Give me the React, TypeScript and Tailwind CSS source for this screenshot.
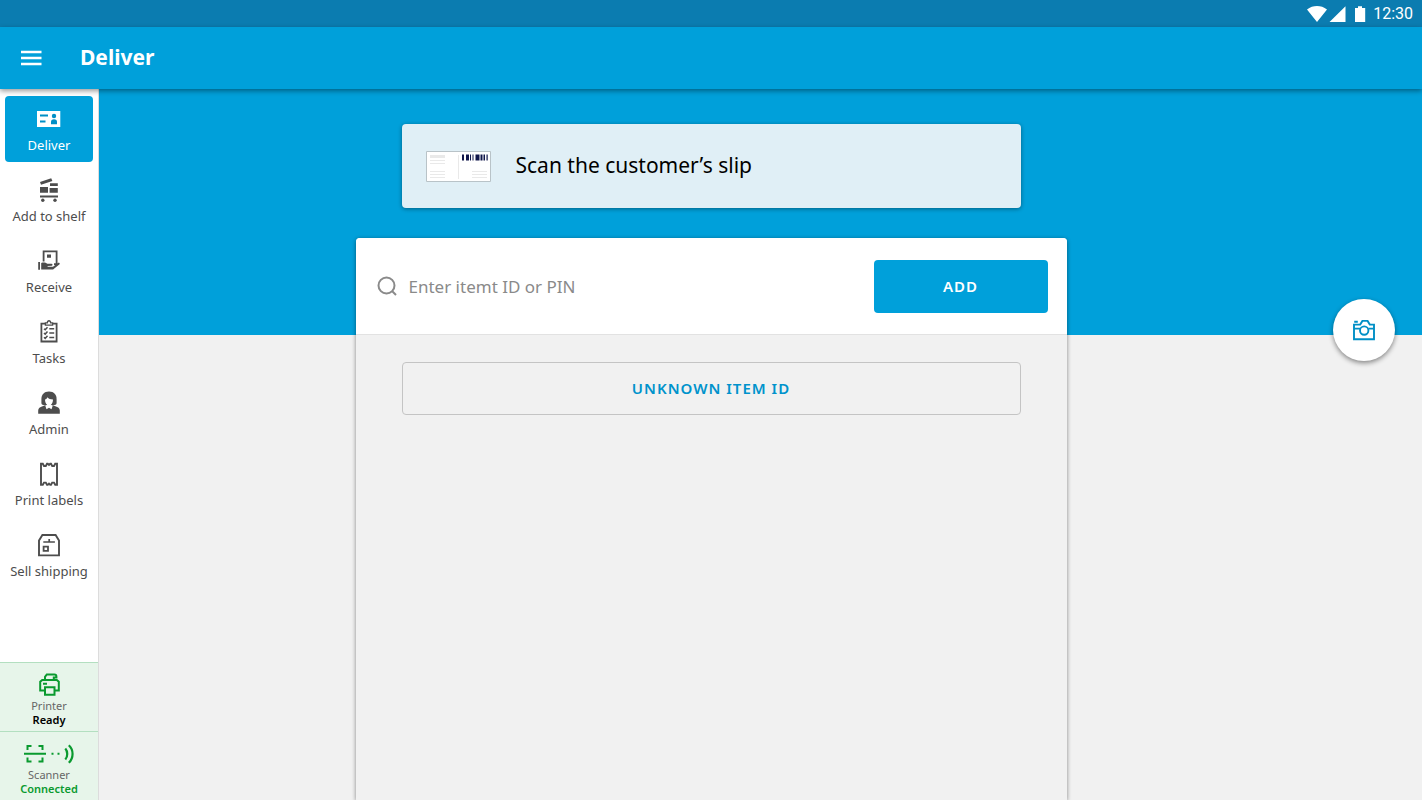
import React, { useState } from 'react';

interface IconProps {
  className?: string;
}

const DeliverIcon: React.FC<IconProps> = ({ className }) => (
  <svg viewBox="0 0 24 24" className={className} fill="none" aria-hidden="true">
    <path fill="currentColor" d="M0 4h23.3v16H0z" />
    <path stroke="#008fc6" strokeWidth="1.8" d="M3 8.500h8M3 14.500h5.500" />
    <circle cx="17" cy="9" r="2.200" fill="#008fc6" />
    <path fill="#008fc6" d="M14 17.200v-2.600c0-1.500 1-2.400 3-2.400s3 .9 3 2.400v2.600z" />
  </svg>
);

const ShelfIcon: React.FC<IconProps> = ({ className }) => (
  <svg viewBox="0 0 24 24" className={className} fill="currentColor" aria-hidden="true">
    <path d="M3 4 14.2.2l1.200 2.700L4 6.800zM3 9h8v5.700H3zM13 5.200h7.800V8H13zM12.600 10h8.200v4.700h-8.200zM3 17.500h18v1.900H3z" />
    <circle cx="5.800" cy="22.200" r="1.700" />
    <circle cx="18" cy="22.200" r="1.700" />
  </svg>
);

const ReceiveIcon: React.FC<IconProps> = ({ className }) => (
  <svg viewBox="0 0 24 24" className={className} fill="none" aria-hidden="true">
    <path stroke="currentColor" strokeWidth="1.800" d="M6.600 12.500V2.300h13V15.200H17" />
    <path fill="currentColor" d="M10 5.600h4v3.200h-4zM1.200 13H3v7.800H1.200zM4.200 14c2.600-1 4.400-.3 6.200.8h4c1.400 0 1.500 1.700.4 1.900l-4.200.3v.7h5.400l4.800-3.600c1-.7 2.400.1 1.800 1.100L17 19.700c-.6.600-1.100.9-1.900.9H4.200z" />
  </svg>
);

const TasksIcon: React.FC<IconProps> = ({ className }) => (
  <svg viewBox="0 0 24 24" className={className} fill="none" stroke="currentColor" aria-hidden="true">
    <path strokeWidth="1.800" d="M8 3.700H4.400v17.800h15.200V3.700H16" />
    <path strokeWidth="1.300" d="M8.400 5.100V2.900h1.900c.2-2.900 3.200-2.900 3.400 0h1.900v2.200z" />
    <path strokeWidth="1.500" d="m7 8.700 1.200 1.100 2.300-2.600M7 13l1.200 1.100 2.300-2.600M7 17.300l1.200 1.100 2.300-2.600M12.300 8.800h4.900M12.300 13.100h4.900M12.300 17.400h4.900" />
  </svg>
);

const AdminIcon: React.FC<IconProps> = ({ className }) => (
  <svg viewBox="0 0 24 24" className={className} fill="currentColor" aria-hidden="true">
    <path d="M12 .6C7 .6 4.400 3.800 4.400 8v4c0 1.200.8 1.900 2 1.900h11.200c1.200 0 2-.7 2-1.900V8C19.600 3.800 17 .6 12 .6z" />
    <path d="M1.200 22.800v-3.200c0-2.500 1.800-3.700 4.400-4.400l3.400-1.400h6l3.400 1.400c2.600.7 4.400 1.900 4.400 4.400v3.200z" />
    <path fill="#fff" d="M8 8.400c1.300-.3 2-1.100 2.400-2.200 1.200 1.500 3 2.200 5.600 2.200 0 2.600-.9 4.300-2.200 5.300l2 .9-1.300 3.600-2.500-1.500-2.500 1.500-1.300-3.600 2-.9C8.900 12.700 8 11 8 8.400z" />
  </svg>
);

const LabelsIcon: React.FC<IconProps> = ({ className }) => (
  <svg viewBox="0 0 24 24" className={className} fill="none" stroke="currentColor" strokeWidth="1.900" aria-hidden="true">
    <path d="M4 1.800h1.800L7 4h1.800L10 1.800h.8L12 3l1.200-1.200h.8L15.200 4H17l1.200-2.200H20v21h-1.800L17 20.600h-1.800L14 22.800h-.8L12 21.600l-1.200 1.200H10l-1.200-2.200H7l-1.200 2.200H4z" />
  </svg>
);

const ShippingIcon: React.FC<IconProps> = ({ className }) => (
  <svg viewBox="0 0 24 24" className={className} fill="none" stroke="currentColor" aria-hidden="true">
    <path strokeWidth="1.900" d="M5.400 2h13.200L22 7.500v14.900H2V7.500z" />
    <path strokeWidth="1.700" d="M6.300 9h11.600M12.200 6v3" />
    <path strokeWidth="1.800" d="M6.600 13.600h4.400v4.200H6.600z" />
  </svg>
);

const PrinterIcon: React.FC<IconProps> = ({ className }) => (
  <svg viewBox="0 0 24 24" className={className} fill="none" stroke="currentColor" strokeWidth="2" aria-hidden="true">
    <path d="M8 17.500H3.200V8.800l2-1.800h14.600l2 1.800v8.700h-4.300" />
    <path d="M8 7V3.800l1.800-2.300h7.600c1.300 0 2 .9 2 2.300v.8h-2.600V7M8 14.300h9.500v7.400H8zM6 10.800h4" />
  </svg>
);

const ScannerIcon: React.FC<IconProps> = ({ className }) => (
  <svg viewBox="0 0 50 20" className={className} fill="none" stroke="currentColor" strokeWidth="2" aria-hidden="true">
    <path d="M0 9.700h22M3.500 6V2h4M14.500 2h4v4M3.500 13.500v4h4M14.500 17.500h4v-4" />
    <path d="M27.500 9.700h2M33.500 9.700h2" />
    <path strokeWidth="2.200" d="M41.300 4.500c2.600 3 2.600 8 0 11M44.800 1.200c5 4.500 5 13 0 17.600" />
  </svg>
);

const CameraIcon: React.FC<IconProps> = ({ className }) => (
  <svg viewBox="0 0 24 22" className={className} fill="none" stroke="currentColor" strokeWidth="1.900" aria-hidden="true">
    <path d="M2 20.200V5.600h6.200l2.200-3.700h5.200l2.200 3.700H22v14.600z" />
    <path d="M2 9.600h6M16.400 9.600H22M2.200 2.800h3.600" />
    <circle cx="12.200" cy="11.600" r="4.200" />
  </svg>
);

// Miniature of the slip that the customer brings
const SlipPicture: React.FC<IconProps> = ({ className }) => (
  <svg viewBox="0 0 65 31" className={className} aria-hidden="true">
    <path fill="#fff" stroke="#b9c3c8" d="M.5.5h64v30H.5z" />
    <path fill="#e9e9e9" d="M4 4h15v3H4zM4 9h15v1H4zM4 12h15v1H4zM4 20h15v1H4zM4 23h15v1H4zM4 26h15v1H4zM46 20h15v1H46zM46 23h15v1H46zM46 26h15v1H46zM32 4h1v24h-1z" />
    <path fill="#10164a" d="M36 3.500h2v6h-2zM40 3.500h3v6h-3zM44 3.500h1v6h-1zM46.500 3.500h1v6h-1zM49.500 3.500h4v6h-4zM54.500 3.500h2v6h-2zM57.500 3.500h1.500v6h-1.500zM60.500 3.500h1.200v6h-1.200z" />
  </svg>
);

const menuItems = [
  { id: 'deliver', label: 'Deliver', Icon: DeliverIcon },
  { id: 'shelf', label: 'Add to shelf', Icon: ShelfIcon },
  { id: 'receive', label: 'Receive', Icon: ReceiveIcon },
  { id: 'tasks', label: 'Tasks', Icon: TasksIcon },
  { id: 'admin', label: 'Admin', Icon: AdminIcon },
  { id: 'labels', label: 'Print labels', Icon: LabelsIcon },
  { id: 'shipping', label: 'Sell shipping', Icon: ShippingIcon },
];

const StatusBar: React.FC = () => (
  <div className="flex h-[27px] shrink-0 items-center justify-end bg-[#0b7cb0] pr-[9px] text-white">
    <svg viewBox="0 0 59 16" className="mr-[7px] h-4 w-[59px]" fill="currentColor" aria-hidden="true">
      <path d="M0 3.500C6-1.100 14-1.100 20 3.500L10 16zM22.500 16 38.500.2V16zM48 2h3V.2h4V2h3.200v14H48z" />
    </svg>
    <span className="font-['Roboto',sans-serif] text-base">12:30</span>
  </div>
);

const Header: React.FC = () => (
  <header className="relative z-10 flex h-[62px] shrink-0 items-center bg-[#00a0da] px-5 text-white shadow-[0_2px_5px_rgba(0,0,0,0.4)]">
    <button type="button" aria-label="Menu" className="mr-[38px]">
      <svg viewBox="0 0 22 18" className="h-[18px] w-[22px]" stroke="currentColor" strokeWidth="2.400" aria-hidden="true">
        <path d="M1 3h20.500M1 9h20.500M1 15h20.500" />
      </svg>
    </button>
    <h1 className="text-[21px] font-bold">Deliver</h1>
  </header>
);

const Sidebar: React.FC = () => {
  const [current, setCurrent] = useState('deliver');

  return (
    <aside className="flex w-[99px] shrink-0 flex-col border-r border-[#dcdcdc] bg-white">
      <nav className="flex flex-col gap-[5px] px-[5px] pt-[7px] pb-5">
        {menuItems.map(({ id, label, Icon }) => (
          <button
            key={id}
            type="button"
            onClick={() => setCurrent(id)}
            className={`flex h-[66px] flex-col items-center gap-1 rounded pt-[11px] text-[13px] leading-5 whitespace-nowrap ${
              current === id ? 'bg-[#00a0da] text-white' : 'text-[#4d4d4d]'
            }`}
          >
            <Icon className="size-6 shrink-0" />
            {label}
          </button>
        ))}
      </nav>

      <div className="mt-auto text-center text-[11px] leading-[14px]">
        <div className="flex h-[69px] flex-col items-center border-t border-[#b3dfc0] bg-[#e7f5ea] pt-[10px]">
          <PrinterIcon className="mb-[2px] size-6 text-[#0a9a2f]" />
          <p className="text-[#666]">Printer</p>
          <p className="font-semibold text-black">Ready</p>
        </div>
        <div className="flex h-[69px] flex-col items-center border-t border-[#b3dfc0] bg-[#e7f5ea] pt-3">
          <ScannerIcon className="mb-1 h-5 w-[50px] text-[#0a9a2f]" />
          <p className="text-[#666]">Scanner</p>
          <p className="font-semibold text-[#0a9a2f]">Connected</p>
        </div>
      </div>
    </aside>
  );
};

const App: React.FC = () => {
  const [itemId, setItemId] = useState('');

  return (
    <div className="flex min-h-screen flex-col bg-[#f1f1f1] font-['Noto_Sans',sans-serif]">
      <StatusBar />
      <Header />

      <div className="flex flex-1">
        <Sidebar />

        {/* The right padding mirrors the sidebar so the card sits in the middle of the window */}
        <main className="relative flex min-w-0 flex-1 flex-col items-center bg-[linear-gradient(#00a0da_246px,#f1f1f1_246px)] pt-[35px] pr-[99px]">
          <div className="flex w-full max-w-[711px] flex-1 flex-col">
            <div className="mx-[46px] mb-[30px] flex h-[84px] items-center gap-[25px] rounded bg-[#e0eff6] px-6 shadow-[0_1px_4px_rgba(0,0,0,0.4)]">
              <SlipPicture className="h-[31px] w-[65px] shrink-0" />
              <p className="text-[21px] text-black">Scan the customer’s slip</p>
            </div>

            <section className="flex flex-1 flex-col rounded-t bg-[#f1f1f1] shadow-[0_1px_4px_rgba(0,0,0,0.45)]">
              <form
                onSubmit={(e) => e.preventDefault()}
                className="flex h-[97px] items-center rounded-t border-b border-[#e2e2e2] bg-white pr-[19px] pl-[21px]"
              >
                <label htmlFor="item-id" aria-label="Item ID or PIN">
                  <svg viewBox="0 0 22 22" className="size-[22px] text-[#8a8a8a]" fill="none" stroke="currentColor" strokeWidth="2" aria-hidden="true">
                    <circle cx="9.500" cy="10.500" r="8" />
                    <path d="m15 16 4 4" />
                  </svg>
                </label>
                <input
                  id="item-id"
                  type="text"
                  value={itemId}
                  onChange={(e) => setItemId(e.target.value)}
                  placeholder="Enter itemt ID or PIN"
                  className="ml-[10px] h-10 min-w-0 flex-1 text-[17px] text-black outline-none placeholder:text-[#8a8a8a]"
                />
                <button type="submit" className="h-[53px] w-[174px] rounded bg-[#00a0da] text-[15px] font-semibold tracking-[1px] text-white">
                  ADD
                </button>
              </form>

              <button
                type="button"
                className="mx-[46px] mt-[27px] h-[53px] rounded border border-[#c4c4c4] text-[15px] font-semibold tracking-[1px] text-[#0093cc]"
              >
                UNKNOWN ITEM ID
              </button>
            </section>
          </div>

          <button
            type="button"
            aria-label="Camera"
            className="absolute top-[210px] right-[27px] flex size-[62px] items-center justify-center rounded-full bg-white text-[#008fc6] shadow-[0_2px_5px_rgba(0,0,0,0.45)]"
          >
            <CameraIcon className="h-[22px] w-6" />
          </button>
        </main>
      </div>
    </div>
  );
};

export default App;
